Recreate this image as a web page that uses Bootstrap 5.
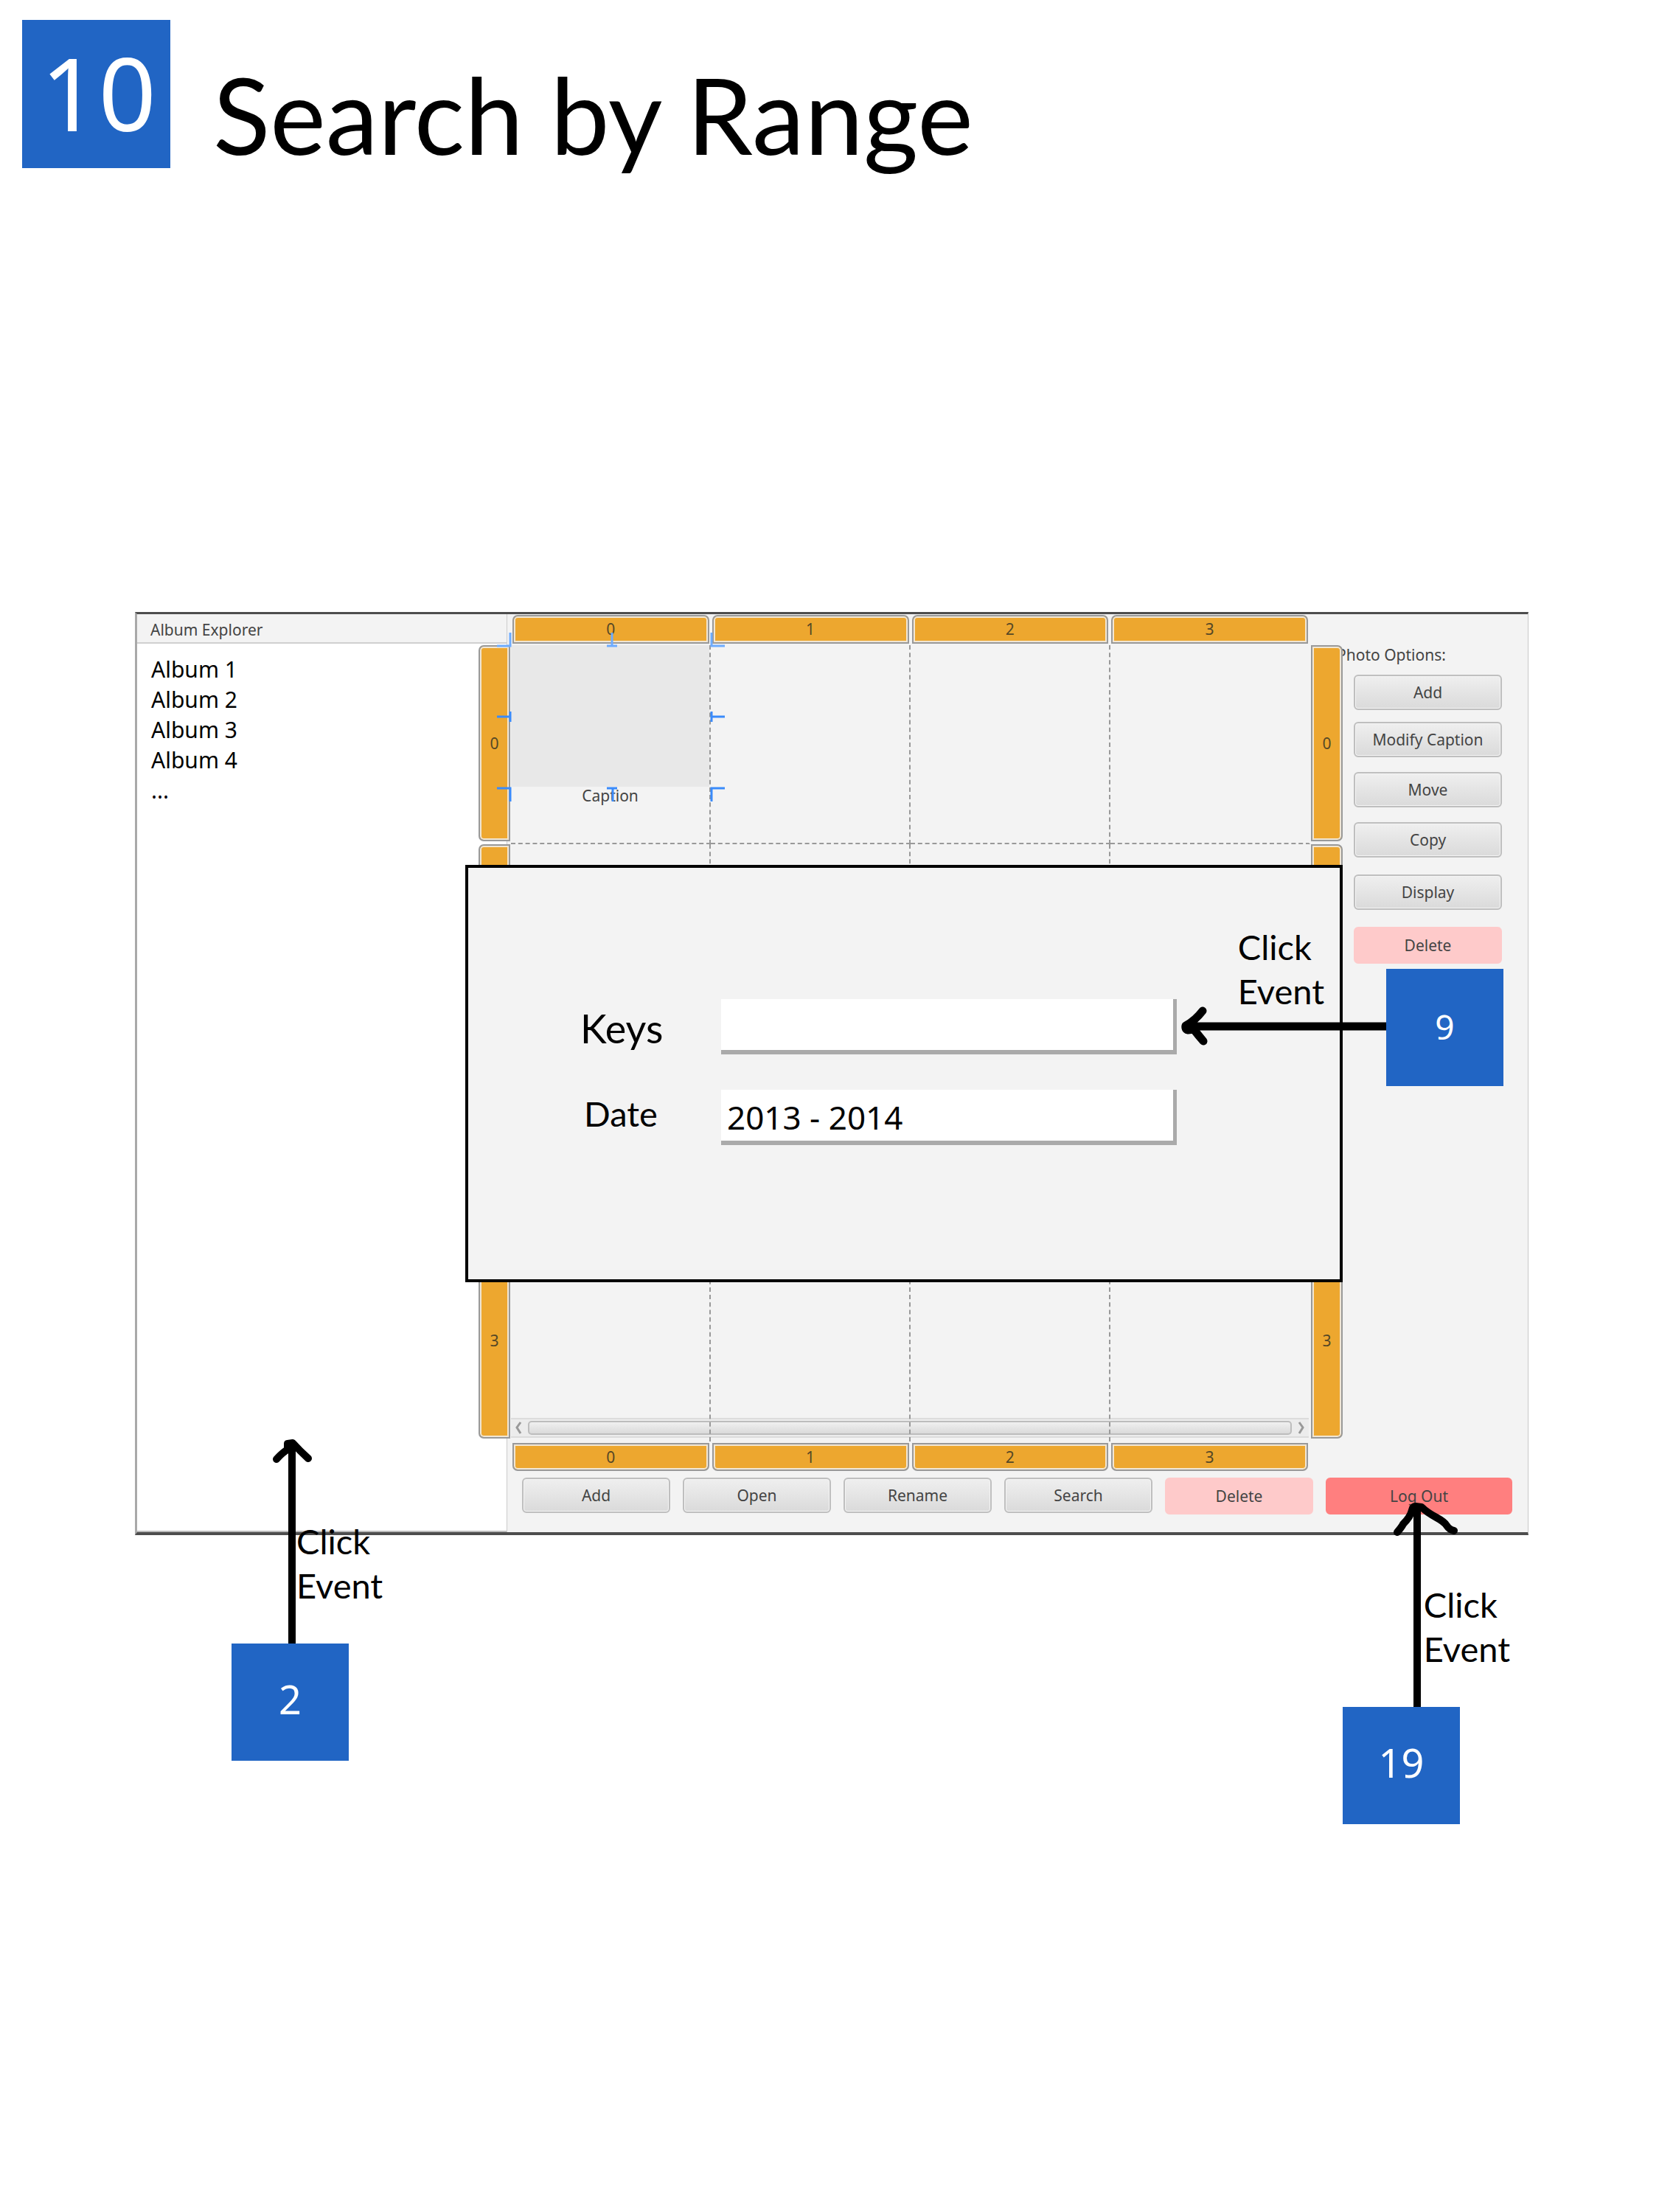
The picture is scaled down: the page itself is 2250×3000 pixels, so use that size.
<!DOCTYPE html>
<html lang="en">
<head>
<meta charset="utf-8">
<meta name="viewport" content="width=device-width, initial-scale=1">
<title>Search by Range</title>
<link href="https://cdn.jsdelivr.net/npm/bootstrap@5.3.0/dist/css/bootstrap.min.css" rel="stylesheet">
<style>
  body { font-family: "Noto Sans", "Open Sans", sans-serif; color: #000; background: #fff; }
  .note-font { font-family: Lato, "Noto Sans", sans-serif; }

  /* Page header */
  .page-head { padding: 27px 30px 0; }
  .step-square { background: #2165c4; color: #fff; }
  .step-main { width: 201px; height: 201px; font-size: 137px; line-height: 196px; padding-left: 6px; }
  .page-title { font-size: 143px; line-height: 201px; margin: 27px 0 0 58px; }

  /* Stage */
  .stage { margin: 575px 177px 0 183px; padding-bottom: 480px; }
  .app-window { background: #f3f3f3; border: solid #4d4d4d; border-width: 3px 1px 4px 3px; border-left-color: #a9a9a9; border-right-color: #c8c8c8; font-size: 21px; color: #444; }
  .albums { width: 502px; border-right: 1px solid #ccc; }
  .albums-head { height: 40px; line-height: 43px; padding-left: 18px; border-bottom: 2px solid #d0d0d0; font-size: 21px; margin: 0; }
  .albums-list { background: #fff; padding: 14px 19px; font-size: 30px; line-height: 41px; color: #000; border-bottom: 2px solid #bbb; }

  /* Photo grid with its numbered handles */
  .board { display: grid; grid-template-columns: 43px minmax(0, 1fr) 43px; grid-template-rows: 39px 1080px 38px; row-gap: 2px; padding-top: 1px; margin-left: -39px; }
  .tabs-h { display: grid; grid-template-columns: repeat(4, 1fr); column-gap: 4px; margin: 0 4px 0 3px; grid-column: 2; }
  .tabs-v { display: grid; grid-template-rows: repeat(4, 266px); row-gap: 4px; position: relative; z-index: 1; }
  .tabs-left { grid-column: 1; }
  .handle { background: #eda72f; border: 2px solid #999; box-shadow: inset 0 0 0 2px #f1e6d3; display: flex; align-items: center; justify-content: center; line-height: 1; color: #554726; }
  .tabs-top .handle { border-radius: 7px 7px 0 0; }
  .tabs-bottom .handle { border-radius: 0 0 7px 7px; }
  .tabs-left .handle { border-radius: 7px 0 0 7px; }
  .tabs-right .handle { border-radius: 0 7px 7px 0; }
  .cells { position: relative; display: grid; grid-template-columns: repeat(4, 1fr); grid-auto-rows: 270px; margin: 0 1px; }
  .cell { position: relative; border: 0 dashed #999; border-width: 0 2px 2px 0; }
  .cell.edge { border-right-color: transparent; }
  .cell.last { border-bottom: 0; }
  .photo { height: 192px; background: #e8e8e8; }
  .photo-name { line-height: 25px; text-align: center; }
  .grips { position: absolute; left: -19px; top: -19px; z-index: 2; }
  .scroller { position: absolute; left: 0; right: 2px; bottom: 5px; height: 27px; background: #ececec; border: solid #dcdcdc; border-width: 2px 0; padding: 0 5px; }
  .scroller-thumb { height: 19px; border: 2px solid #bdbdbd; border-radius: 5px; background: linear-gradient(#f0f0f0, #dadada); margin: 0 8px; }

  /* Buttons */
  .tool { width: 201px; height: 48px; padding: 0; font-size: 21px; line-height: 44px; color: #444; background: linear-gradient(#efefef, #dadada); border: 2px solid #bfbfbf; border-radius: 6px; box-shadow: inset 0 0 0 1px #f4f4f4; }
  .tool-soft { height: 50px; background: #fecaca; border-color: #fecaca; box-shadow: none; }
  .tool-exit { height: 50px; width: 253px; background: #ff7f7f; border-color: #ff7f7f; box-shadow: none; }
  .tool-row { gap: 17px; padding: 9px 0 0 20px; height: 83px; }
  .options { width: 251px; padding: 41px 0 0 15px; }
  .options-title { font-size: 21px; line-height: 28px; margin: 0 0 13px -23px; }
  .options-stack .tool { margin-bottom: 20px; }
  .options-stack .tool:first-child { margin-bottom: 16px; }
  .options-stack .tool:nth-child(n+4) { margin-bottom: 23px; }

  /* Search dialog */
  .dialog-box { position: absolute; left: 448px; right: 252px; top: 343px; z-index: 3; background: #f3f3f3; border: 4px solid #000; padding: 178px 221px 182px 152px; }
  .dialog-label { width: 191px; flex: none; color: #000; }
  .label-keys { font-size: 54px; line-height: 80px; height: 77px; }
  .label-date { font-size: 47px; line-height: 64px; padding-left: 5px; }
  .dialog-field { min-width: 0; height: 75px; border: 0 solid #aaa; border-width: 0 5px 6px 0; border-radius: 0; background: #fff; font-size: 44px; padding: 4px 0 0 8px; color: #000; }
  .dialog-fields { gap: 46px; }

  /* Annotations drawn over the screen */
  .pin { position: absolute; z-index: 4; }
  .pin-note { font-size: 47px; line-height: 60px; }
  .pin-square { width: 159px; height: 159px; line-height: 150px; text-align: center; font-size: 54px; }
  .pin-square.compact { font-size: 46px; line-height: 156px; }
</style>
</head>
<body>
<header class="page-head d-flex align-items-start">
  <div class="step-square step-main text-center">10</div>
  <h1 class="page-title note-font fw-normal">Search by Range</h1>
</header>

<main class="stage position-relative">
  <div class="app-window d-flex">
    <aside class="albums d-flex flex-column flex-shrink-0">
      <h2 class="albums-head fw-normal">Album Explorer</h2>
      <ul class="albums-list list-unstyled flex-grow-1 mb-0">
        <li>Album 1</li>
        <li>Album 2</li>
        <li>Album 3</li>
        <li>Album 4</li>
        <li>...</li>
      </ul>
    </aside>

    <div class="flex-grow-1">
      <div class="d-flex">
        <div class="board flex-grow-1">
          <div class="tabs-h tabs-top">
            <div class="handle">0</div><div class="handle">1</div><div class="handle">2</div><div class="handle">3</div>
          </div>
          <div class="tabs-v tabs-left">
            <div class="handle">0</div><div class="handle">1</div><div class="handle">2</div><div class="handle">3</div>
          </div>
          <div class="cells">
            <div class="cell">
              <div class="photo"></div>
              <div class="photo-name">Caption</div>
              <svg class="grips" width="310" height="232" fill="none" stroke="#3a8bfb" stroke-width="3">
                <path stroke="#6eacff" d="M0 20H18V2M149 20H163M156 20V2M309 20H291V2"/>
                <path d="M0 116H18M18 109V123M309 116H291M291 109V123M0 213H18V231M149 213H163M157 213V231M309 213H291V231"/>
              </svg>
            </div>
            <div class="cell"></div><div class="cell"></div><div class="cell edge"></div>
            <div class="cell"></div><div class="cell"></div><div class="cell"></div><div class="cell edge"></div>
            <div class="cell"></div><div class="cell"></div><div class="cell"></div><div class="cell edge"></div>
            <div class="scroller d-flex align-items-center">
              <svg width="10" height="17" fill="none" stroke="#999" stroke-width="3"><path d="M8 1L3 8L8 16"/></svg>
              <div class="scroller-thumb flex-grow-1"></div>
              <svg width="10" height="17" fill="none" stroke="#999" stroke-width="3"><path d="M2 1L7 8L2 16"/></svg>
            </div>
            <div class="cell last"></div><div class="cell last"></div><div class="cell last"></div><div class="cell edge last"></div>
          </div>
          <div class="tabs-v tabs-right">
            <div class="handle">0</div><div class="handle">1</div><div class="handle">2</div><div class="handle">3</div>
          </div>
          <div class="tabs-h tabs-bottom">
            <div class="handle">0</div><div class="handle">1</div><div class="handle">2</div><div class="handle">3</div>
          </div>
        </div>
        <div class="options flex-shrink-0">
          <h2 class="options-title fw-normal">Photo Options:</h2>
          <div class="options-stack d-flex flex-column">
            <button class="btn tool" type="button">Add</button>
            <button class="btn tool" type="button">Modify Caption</button>
            <button class="btn tool" type="button">Move</button>
            <button class="btn tool" type="button">Copy</button>
            <button class="btn tool" type="button">Display</button>
            <button class="btn tool tool-soft" type="button">Delete</button>
          </div>
        </div>
      </div>
      <div class="tool-row d-flex align-items-start">
        <button class="btn tool" type="button">Add</button>
        <button class="btn tool" type="button">Open</button>
        <button class="btn tool" type="button">Rename</button>
        <button class="btn tool" type="button">Search</button>
        <button class="btn tool tool-soft" type="button">Delete</button>
        <button class="btn tool tool-exit" type="button">Log Out</button>
      </div>
    </div>
  </div>

  <form class="dialog-box">
    <div class="dialog-fields d-flex flex-column">
      <div class="d-flex align-items-start">
        <label class="dialog-label label-keys note-font" for="keys">Keys</label>
        <input class="dialog-field flex-grow-1" id="keys" type="text">
      </div>
      <div class="d-flex align-items-start">
        <label class="dialog-label label-date note-font" for="date">Date</label>
        <input class="dialog-field flex-grow-1" id="date" type="text" value="2013 - 2014">
      </div>
    </div>
  </form>

  <svg class="pin" style="right:190px;top:530px" width="284" height="64" fill="none" stroke="#000" stroke-width="11" stroke-linecap="round" stroke-linejoin="round"><path d="M10 32H284M32 11Q22 24 9 31Q8 36 12 37L20 36Q27 45 33 52"/></svg>
  <div class="pin pin-note note-font" style="right:277px;top:424px">Click<br>Event</div>
  <div class="pin pin-square compact step-square" style="right:34px;top:484px">9</div>

  <svg class="pin" style="left:180px;top:1114px" width="66" height="290" fill="none" stroke="#000" stroke-width="10" stroke-linecap="round" stroke-linejoin="round"><path d="M33 16V290M12 35Q20 26 27 22V14L34 13Q44 24 55 34"/></svg>
  <div class="pin pin-note note-font" style="left:219px;top:1230px">Click<br>Event</div>
  <div class="pin pin-square step-square" style="left:131px;top:1399px">2</div>

  <svg class="pin" style="right:92px;top:1200px" width="100" height="290" fill="none" stroke="#000" stroke-width="10" stroke-linecap="round" stroke-linejoin="round"><path d="M41 14V290M14 48Q20 41 22 37Q32 27 34 18Q35 13 39 13L47 14Q54 21 67 28Q78 34 81 39Q85 45 91 46"/></svg>
  <div class="pin pin-note note-font" style="right:25px;top:1316px">Click<br>Event</div>
  <div class="pin pin-square step-square" style="right:93px;top:1485px">19</div>
</main>
<script src="https://cdn.jsdelivr.net/npm/bootstrap@5.3.0/dist/js/bootstrap.bundle.min.js"></script>
</body>
</html>
